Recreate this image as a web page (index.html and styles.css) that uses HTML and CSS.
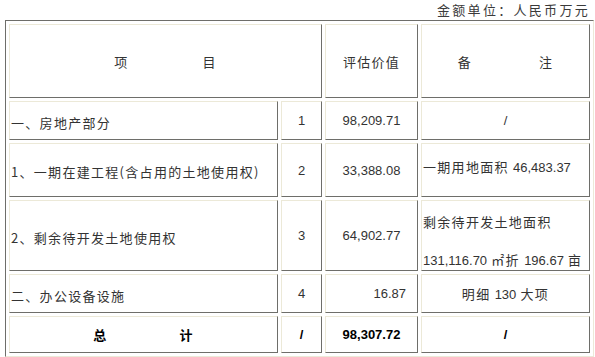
FILE: index.html
```html
<!DOCTYPE html>
<html>
<head>
<meta charset="utf-8">
<link rel="stylesheet" href="styles.css">
</head>
<body>
<div class="unit">金额单位：人民币万元</div>
<table class="grid">
  <colgroup>
    <col class="col-name">
    <col class="col-no">
    <col class="col-val">
    <col class="col-note">
  </colgroup>
  <tr class="r-head">
    <td colspan="2" class="c"><span class="sp sp-xm">项</span>目</td>
    <td class="c">评估价值</td>
    <td class="c"><span class="sp sp-bz">备</span>注</td>
  </tr>
  <tr class="r1">
    <td class="name">一、房地产部分</td>
    <td class="c num">1</td>
    <td class="c num">98,209.71</td>
    <td class="c num">/</td>
  </tr>
  <tr class="r2">
    <td class="name">1、一期在建工程(含占用的土地使用权)</td>
    <td class="c num">2</td>
    <td class="c num">33,388.08</td>
    <td class="note note-up">一期用地面积 <span class="num">46,483.37</span></td>
  </tr>
  <tr class="r3">
    <td class="name">2、剩余待开发土地使用权</td>
    <td class="c num">3</td>
    <td class="c num">64,902.77</td>
    <td class="note note-two"><div class="line1">剩余待开发土地面积</div><div><span class="num">131,116.70</span> ㎡折 <span class="num">196.67</span> 亩</div></td>
  </tr>
  <tr class="r4">
    <td class="name">二、办公设备设施</td>
    <td class="c num">4</td>
    <td class="num right">16.87</td>
    <td class="c">明细 <span class="num">130</span> 大项</td>
  </tr>
  <tr class="r5">
    <td class="c bold"><span class="sp sp-zj">总</span>计</td>
    <td class="c num bold">/</td>
    <td class="c num bold">98,307.72</td>
    <td class="c num bold">/</td>
  </tr>
</table>
</body>
</html>
```

FILE: styles.css
```css
html, body {
  margin: 0;
  padding: 0;
  background: #ffffff;
}
body {
  font-family: "Noto Sans CJK SC", "Noto Sans", sans-serif;
  font-size: 13px;
  color: #333;
  width: 595px;
  height: 357px;
  overflow: hidden;
}
.unit {
  height: 20px;
  line-height: 20px;
  text-align: right;
  padding-right: 5px;
  letter-spacing: 2.3px;
  color: #3a3a3a;
  box-sizing: border-box;
}
.grid {
  margin-left: 5px;
  width: 589px;
  border-collapse: separate;
  border-spacing: 3px;
  border: 1px solid;
  border-color: #6e6e6a #ece9d8 #ece9d8 #6e6e6a;
  table-layout: fixed;
}
.col-name { width: 269px; }
.col-no { width: 41px; }
.col-val { width: 93px; }
.col-note { width: 169px; }
.grid td {
  box-sizing: border-box;
  border: 1px solid;
  border-color: #ece9d8 #6e6e6a #6e6e6a #ece9d8;
  padding: 0 1px;
  letter-spacing: 1.3px;
  white-space: nowrap;
  overflow: hidden;
  vertical-align: middle;
}
.r-head td { height: 74px; }
.r1 td { height: 39px; }
.r2 td { height: 54px; }
.r3 td { height: 71px; }
.r4 td { height: 39px; }
.r5 td { height: 37px; }
.grid .c { text-align: center; }
.grid .num {
  font-family: "Liberation Sans", Arial, sans-serif;
  letter-spacing: 0;
}
.grid td.right { text-align: right; padding-right: 11px; }
.grid td.name { padding-top: 3px; }
.grid .bold { font-weight: bold; color: #000; }
.sp { display: inline-block; }
.sp-xm { margin-right: 74px; }
.sp-bz { margin-right: 67px; }
.sp-zj { margin-right: 72px; }
.grid td.note-up { padding-bottom: 7px; }
.grid td.note-two { vertical-align: top; padding-top: 11px; }
.line1 { height: 38px; }
```
